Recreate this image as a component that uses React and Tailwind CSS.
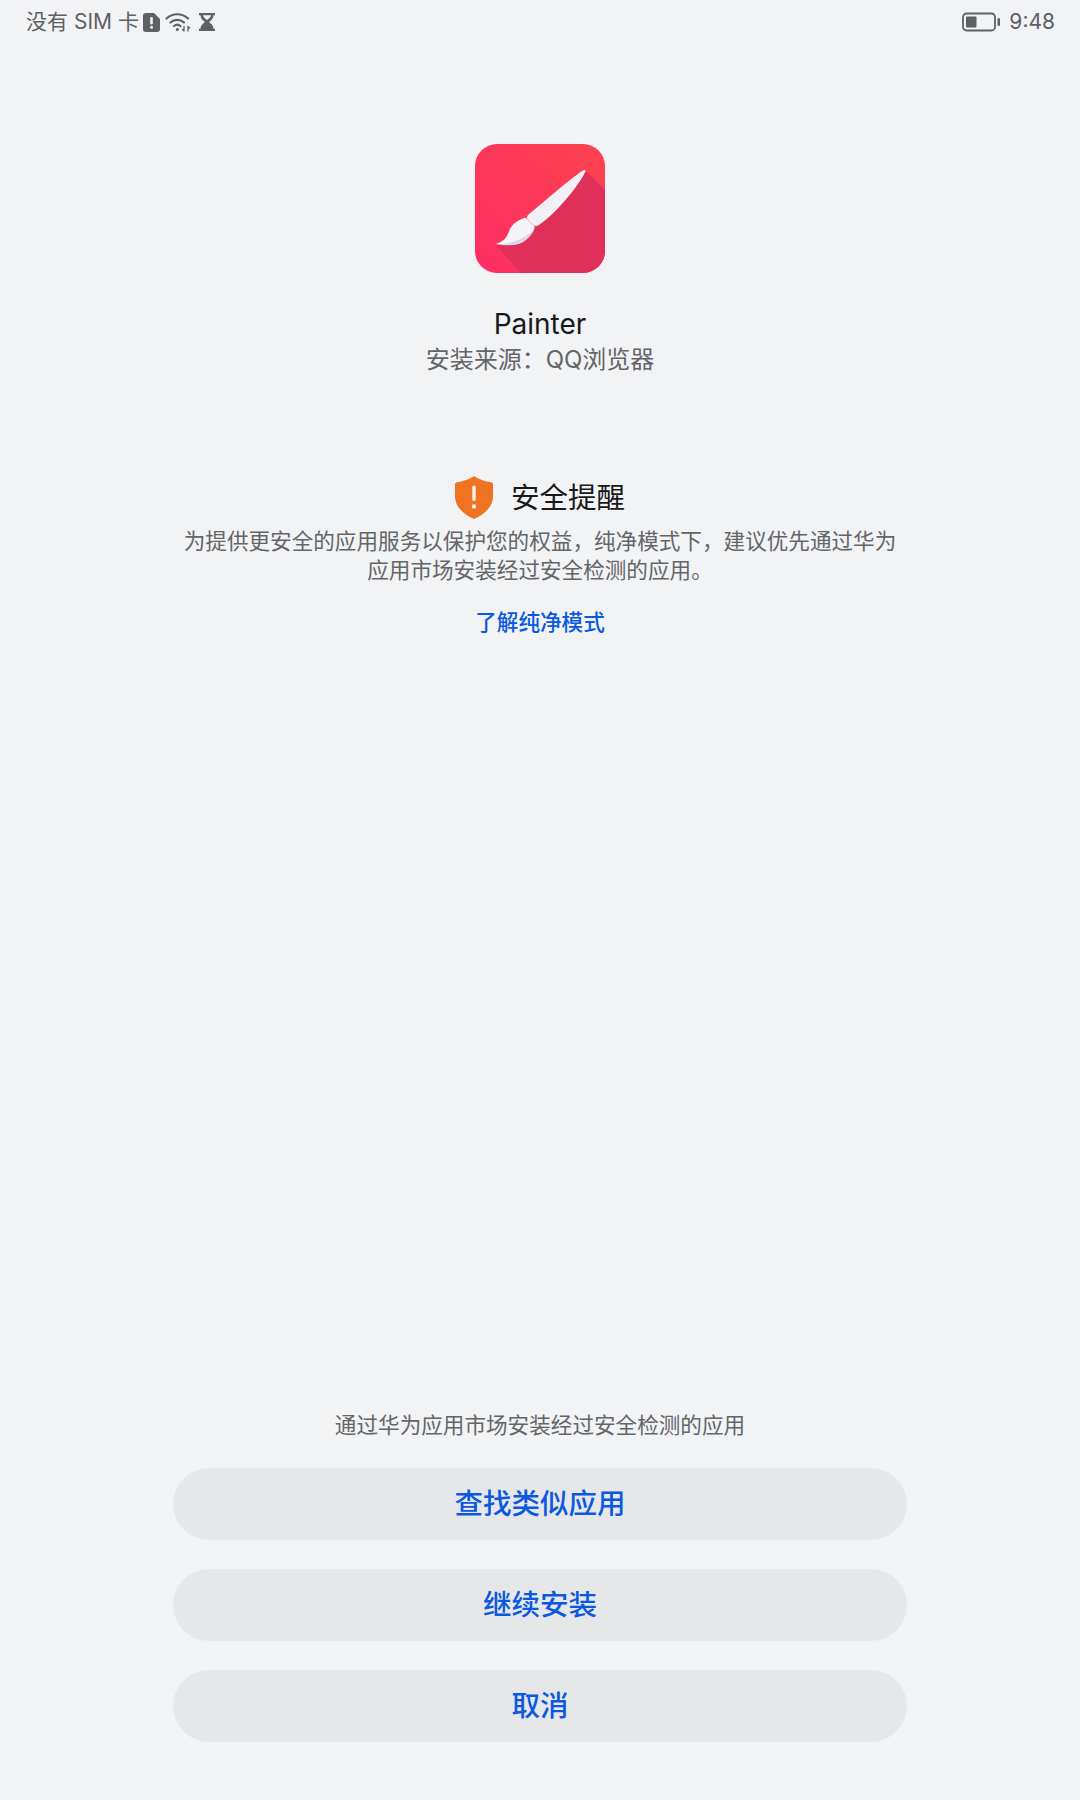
const CN = "font-['Inter','Noto_Sans_CJK_SC',sans-serif]";

const SimAlert = () => (
  <svg width="17" height="19" viewBox="0 0 17 19" className="ml-[4px]">
    <path d="M3 0h8l6 6v10a3 3 0 0 1-3 3H3a3 3 0 0 1-3-3V3a3 3 0 0 1 3-3z" fill="#5f6064" />
    <rect x="7.2" y="4" width="2.6" height="7.5" rx="1.2" fill="#f1f3f5" />
    <circle cx="8.5" cy="14.3" r="1.5" fill="#f1f3f5" />
  </svg>
);

const Wifi = () => (
  <svg width="26" height="20" viewBox="0 0 26 20" fill="none" stroke="#5f6064" strokeWidth="2.2" strokeLinecap="round" className="ml-[5px]">
    <path d="M1.5 6.5C7.5 .8 17 .8 23 6.5" />
    <path d="M5.5 10.5c4-3.6 9.5-3.6 13.5 0" />
    <path d="M9 14c2-1.6 4.500-1.600 6.500 0" />
    <circle cx="12.300" cy="17.500" r="1.500" fill="#5f6064" stroke="none" />
    <path d="M19 14.500v4.500M19 19l-1.500-1.500M23 14.500v4.500M23 14.500l1.500 1.500" strokeWidth="1.300" />
  </svg>
);

const Hourglass = () => (
  <svg width="16" height="18" viewBox="0 0 16 18" className="ml-[8px]">
    <path d="M0 0h16v2.200h-1.500c0 3-2 5-4.500 6.800 2.500 1.800 4.500 3.800 4.500 6.800H16V18H0v-2.200h1.500c0-3 2-5 4.500-6.800C3.500 7.200 1.500 5.200 1.500 2.200H0z" fill="#5f6064" />
    <path d="M4 2.200h8c-.3 1.500-1.500 3-4 4.800-2.500-1.800-3.700-3.300-4-4.800z" fill="#f1f3f5" />
  </svg>
);

const Battery = () => (
  <svg width="38" height="20" viewBox="0 0 38 20">
    <rect x="1" y="1.500" width="32" height="17" rx="3.500" fill="none" stroke="#5f6064" strokeWidth="1.800" />
    <rect x="4" y="4.500" width="10.500" height="11" rx="1" fill="#5f6064" />
    <rect x="35.500" y="6" width="2.500" height="8" rx="1.200" fill="#5f6064" />
  </svg>
);

const PainterIcon = () => (
  <svg width="130" height="129" viewBox="0 0 130 129" className="rounded-[22px]">
    <defs>
      <linearGradient id="painterBg" x1="1" y1="0" x2="0" y2="1">
        <stop offset="0" stopColor="#fd4250" />
        <stop offset="1" stopColor="#fd2d63" />
      </linearGradient>
    </defs>
    <rect width="130" height="129" fill="url(#painterBg)" />
    <path d="M110 26L130 46V129H46L21 101Q44 100 58 86z" fill="#e0305a" />
    <path d="M108 26.500c1.500-1 3-.5 2.500 1C104 41 82 69 64 81c-2 1.300-4.500 1.500-6-.2l-5-5.200c-1.500-1.700-1.300-3.600 .5-5C68 59 92 37 108 26.500z" fill="#f1f0f5" />
    <path d="M49 74c1-.4 2-.2 2.800 .6l7 7.200c.8 .9 1 2 .5 3-3.500 7.500-10 14-18 15.500-6.500 1.200-14 .9-20.300-.3 7-2.500 10.500-6 12.500-11.500C36 81 41 77 49 74z" fill="#f5f4f8" />
    <path d="M59.500 85c-3.500 7.500-10 14-18 15.500-6.500 1.200-14 .9-20.300-.3 12 .2 27-3.700 38.300-15.200z" fill="#d9d8e4" />
  </svg>
);

const Shield = () => (
  <svg width="38" height="43" viewBox="0 0 38 43">
    <path d="M19 0c4.500 3.200 11 5.500 17 6.200 1.300 .2 2 1 2 2.300v12C38 30 30 38.500 19 43 8 38.500 0 30 0 20.500v-12c0-1.300 .7-2.100 2-2.300C8 5.500 14.500 3.200 19 0z" fill="#f07322" />
    <rect x="17.300" y="9.500" width="3.400" height="15.500" rx="1.700" fill="#fdf3ea" />
    <circle cx="19" cy="30.500" r="2.200" fill="#fdf3ea" />
  </svg>
);

const buttons = ['查找类似应用', '继续安装', '取消'];

export default function App() {
  return (
    <div className={`${CN} flex h-[1800px] w-[1080px] flex-col bg-[#f1f3f5]`}>
      {/* status bar */}
      <div className="flex h-[44px] items-center justify-between pl-[26px] pr-[25px] text-[21px] text-[#5f6064]">
        <div className="flex items-center">
          <span>没有 SIM 卡</span>
          <SimAlert />
          <Wifi />
          <Hourglass />
        </div>
        <div className="flex items-center gap-[9px]">
          <Battery />
          <span>9:48</span>
        </div>
      </div>

      {/* app info */}
      <div className="mt-[100px] flex flex-col items-center">
        <PainterIcon />
        <div className="mt-[33px] text-[28px] leading-[36px] text-[#18191b]">Painter</div>
        <div className="mt-[1px] text-[24px] leading-[34px] text-[#646568]">安装来源：QQ浏览器</div>
      </div>

      {/* notice */}
      <div className="mt-[99px] flex flex-col items-center">
        <div className="flex items-center gap-[18px]">
          <Shield />
          <span className="text-[28.500px] leading-[43px] text-[#18191b]">安全提醒</span>
        </div>
        <p className="mt-[8px] w-[730px] text-center text-[21.600px] leading-[29px] text-[#646568]">
          为提供更安全的应用服务以保护您的权益，纯净模式下，建议优先通过华为
          <br />
          应用市场安装经过安全检测的应用。
        </p>
        <a className="mt-[22px] text-[21.600px] font-medium leading-[30px] text-[#0a59e0]">了解纯净模式</a>
      </div>

      {/* actions */}
      <div className="mt-auto flex flex-col items-center pb-[58px]">
        <p className="text-[21.600px] leading-[30px] text-[#646568]">通过华为应用市场安装经过安全检测的应用</p>
        <div className="mt-[28px] flex flex-col gap-[29px]">
          {buttons.map((label) => (
            <button key={label} className="h-[72px] w-[734px] rounded-full bg-[#e6e7e9] text-[28.500px] font-medium text-[#0a59e0]">
              {label}
            </button>
          ))}
        </div>
      </div>
    </div>
  );
}
